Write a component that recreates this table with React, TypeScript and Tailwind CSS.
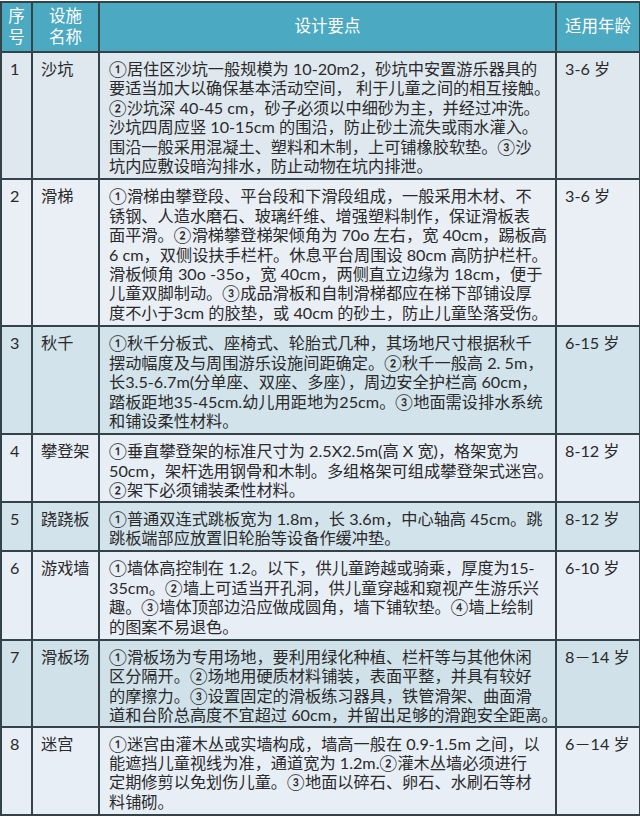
import React from "react";

type Row = { no: string; name: string; lines: string[]; age: string; bg: string; tight?: boolean };

const rows: Row[] = [
  {
    no: "1",
    name: "沙坑",
    lines: [
      "①居住区沙坑一般规模为 10-20m2，砂坑中安置游乐器具的",
      "要适当加大以确保基本活动空间， 利于儿童之间的相互接触。",
      "②沙坑深 40-45 cm，砂子必须以中细砂为主，并经过冲洗。",
      "沙坑四周应竖 10-15cm 的围沿，防止砂土流失或雨水灌入。",
      "围沿一般采用混凝土、塑料和木制，上可铺橡胶软垫。③沙",
      "坑内应敷设暗沟排水，防止动物在坑内排泄。",
    ],
    age: "3-6 岁",
    bg: "bg-[#dfe8ef]",
  },
  {
    no: "2",
    name: "滑梯",
    lines: [
      "①滑梯由攀登段、平台段和下滑段组成，一般采用木材、不",
      "锈钢、人造水磨石、玻璃纤维、增强塑料制作，保证滑板表",
      "面平滑。②滑梯攀登梯架倾角为 70o 左右，宽 40cm，踢板高",
      "6 cm，双侧设扶手栏杆。休息平台周围设 80cm 高防护栏杆。",
      "滑板倾角 30o -35o，宽 40cm，两侧直立边缘为 18cm，便于",
      "儿童双脚制动。③成品滑板和自制滑梯都应在梯下部铺设厚",
      "度不小于3cm 的胶垫，或 40cm 的砂土，防止儿童坠落受伤。",
    ],
    age: "3-6 岁",
    bg: "bg-[#e9eff5]",
  },
  {
    no: "3",
    name: "秋千",
    lines: [
      "①秋千分板式、座椅式、轮胎式几种，其场地尺寸根据秋千",
      "摆动幅度及与周围游乐设施间距确定。②秋千一般高 2. 5m，",
      "长3.5-6.7m(分单座、双座、多座），周边安全护栏高 60cm，",
      "踏板距地35-45cm.幼儿用距地为25cm。③地面需设排水系统",
      "和铺设柔性材料。",
    ],
    age: "6-15 岁",
    bg: "bg-[#d2e3eb]",
  },
  {
    no: "4",
    name: "攀登架",
    lines: [
      "①垂直攀登架的标准尺寸为 2.5X2.5m(高 X 宽)，格架宽为",
      "50cm，架杆选用钢骨和木制。多组格架可组成攀登架式迷宫。",
      "②架下必须铺装柔性材料。",
    ],
    age: "8-12 岁",
    bg: "bg-[#e8eef5]",
    tight: true,
  },
  {
    no: "5",
    name: "跷跷板",
    lines: [
      "①普通双连式跳板宽为 1.8m，长 3.6m，中心轴高 45cm。跳",
      "跳板端部应放置旧轮胎等设备作缓冲垫。",
    ],
    age: "8-12 岁",
    bg: "bg-[#d3e3eb]",
  },
  {
    no: "6",
    name: "游戏墙",
    lines: [
      "①墙体高控制在 1.2。以下，供儿童跨越或骑乘，厚度为15-",
      "35cm。②墙上可适当开孔洞，供儿童穿越和窥视产生游乐兴",
      "趣。③墙体顶部边沿应做成圆角，墙下铺软垫。④墙上绘制",
      "的图案不易退色。",
    ],
    age: "6-10 岁",
    bg: "bg-[#e8eef5]",
  },
  {
    no: "7",
    name: "滑板场",
    lines: [
      "①滑板场为专用场地，要利用绿化种植、栏杆等与其他休闲",
      "区分隔开。②场地用硬质材料铺装，表面平整，并具有较好",
      "的摩擦力。③设置固定的滑板练习器具，铁管滑架、曲面滑",
      "道和台阶总高度不宜超过 60cm，并留出足够的滑跑安全距离。",
    ],
    age: "8－14 岁",
    bg: "bg-[#d0e1e9]",
    tight: true,
  },
  {
    no: "8",
    name: "迷宫",
    lines: [
      "①迷宫由灌木丛或实墙构成，墙高一般在 0.9-1.5m 之间，以",
      "能遮挡儿童视线为准，通道宽为 1.2m.②灌木丛墙必须进行",
      "定期修剪以免划伤儿童。③地面以碎石、卵石、水刷石等材",
      "料铺砌。",
    ],
    age: "6－14 岁",
    bg: "bg-[#e8eef5]",
  },
];

export default function App() {
  const font = { fontFamily: 'Lato, "Noto Sans CJK SC", sans-serif' };
  const base = "border-2 border-[#34424a] align-top pl-[8px] pr-0 pt-[6px]";
  return (
    <div className="w-[640px] h-[824px] bg-white pt-[1px]" style={font}>
      <table className="w-[639px] table-fixed border-collapse text-[16.2px] leading-[19.4px] text-[#2a2a2a]">
        <colgroup>
          <col className="w-[31px]" />
          <col className="w-[67px]" />
          <col className="w-[457px]" />
          <col className="w-[84px]" />
        </colgroup>
        <thead>
          <tr className="bg-[#4ba9c2] text-white h-[50px] text-[16.5px]">
            <th className="border-2 border-[#34424a] font-normal text-center leading-[21px] p-0">
              <div>序</div>
              <div>号</div>
            </th>
            <th className="border-2 border-[#34424a] font-normal text-center leading-[21px] p-0">
              <div>设施</div>
              <div>名称</div>
            </th>
            <th className="border-2 border-[#34424a] font-normal text-center p-0">设计要点</th>
            <th className="border-2 border-[#34424a] font-normal text-center p-0">适用年龄</th>
          </tr>
        </thead>
        <tbody>
          {rows.map((r) => {
            const cell = base + (r.tight ? " pb-[1px]" : " pb-[3px]");
            return (
              <tr key={r.no} className={r.bg}>
                <td className={cell}>{r.no}</td>
                <td className={cell}>{r.name}</td>
                <td className={cell + " pl-[9px]"}>
                  {r.lines.map((l, i) => (
                    <div key={i} className="whitespace-nowrap">
                      {l}
                    </div>
                  ))}
                </td>
                <td className={cell + " whitespace-nowrap"}>{r.age}</td>
              </tr>
            );
          })}
        </tbody>
      </table>
    </div>
  );
}
